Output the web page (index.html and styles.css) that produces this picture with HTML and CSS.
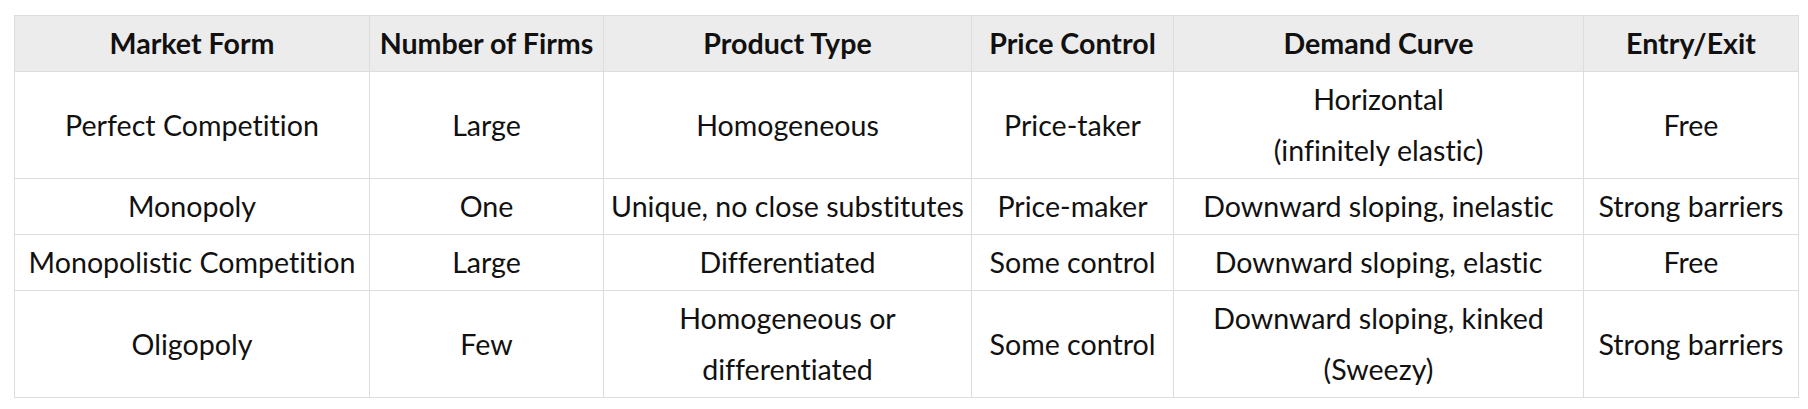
FILE: index.html
```html
<!DOCTYPE html>
<html>
<head>
<meta charset="utf-8">
<link rel="stylesheet" href="styles.css">
</head>
<body>
<table class="market">
  <colgroup>
    <col class="c1"><col class="c2"><col class="c3"><col class="c4"><col class="c5"><col class="c6">
  </colgroup>
  <thead>
    <tr>
      <th>Market Form</th>
      <th>Number of Firms</th>
      <th>Product Type</th>
      <th>Price Control</th>
      <th>Demand Curve</th>
      <th>Entry/Exit</th>
    </tr>
  </thead>
  <tbody>
    <tr>
      <td>Perfect Competition</td>
      <td>Large</td>
      <td>Homogeneous</td>
      <td>Price-taker</td>
      <td>Horizontal<br>(infinitely elastic)</td>
      <td>Free</td>
    </tr>
    <tr>
      <td>Monopoly</td>
      <td>One</td>
      <td>Unique, no close substitutes</td>
      <td>Price-maker</td>
      <td>Downward sloping, inelastic</td>
      <td>Strong barriers</td>
    </tr>
    <tr>
      <td>Monopolistic Competition</td>
      <td>Large</td>
      <td>Differentiated</td>
      <td>Some control</td>
      <td>Downward sloping, elastic</td>
      <td>Free</td>
    </tr>
    <tr>
      <td>Oligopoly</td>
      <td>Few</td>
      <td>Homogeneous or<br>differentiated</td>
      <td>Some control</td>
      <td>Downward sloping, kinked<br>(Sweezy)</td>
      <td>Strong barriers</td>
    </tr>
  </tbody>
</table>
</body>
</html>
```

FILE: styles.css
```css
html, body {
  margin: 0;
  padding: 0;
  background: #ffffff;
}

body {
  font-family: "Lato", "Liberation Sans", sans-serif;
  color: #111111;
}

.market {
  border-collapse: collapse;
  table-layout: fixed;
  width: 1784px;
  margin: 15px 0 0 14px;
  font-size: 28.6px;
  font-variant-ligatures: none;
  font-feature-settings: "liga" 0, "clig" 0, "dlig" 0;
}

.c1 { width: 355px; }
.c2 { width: 234px; }
.c3 { width: 368px; }
.c4 { width: 202px; }
.c5 { width: 410px; }
.c6 { width: 215px; }

.market th,
.market td {
  border: 1px solid #dddddd;
  text-align: center;
  vertical-align: middle;
  padding: 2px 4px;
  line-height: 51px;
  white-space: nowrap;
}

.market th {
  background: #ececec;
  font-weight: 700;
}

.market td {
  font-weight: 400;
}
```
